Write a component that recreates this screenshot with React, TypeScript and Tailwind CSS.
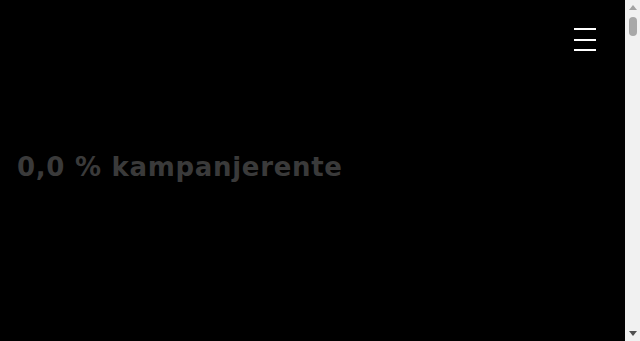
export default function App() {
  return (
    <div className="bg-black min-h-[5800px] w-full">
      <div className="pr-[15px]">
        <header className="flex justify-end pt-[28px] pr-[29px]">
          <button className="flex flex-col gap-[8.5px] w-[22px]">
            <span className="block h-[2px] w-[22px] bg-white" />
            <span className="block h-[2px] w-[22px] bg-white" />
            <span className="block h-[2px] w-[22px] bg-white" />
          </button>
        </header>
        <section className="pt-[103px] pl-[17px]">
          <h1
            className="text-[26px] font-bold text-[#3a3a3a] leading-none tracking-[0.7px]"
            style={{ fontFamily: "'DejaVu Sans', sans-serif" }}
          >
            0,0 % kampanjerente
          </h1>
        </section>
      </div>
      <div className="fixed top-0 right-0 h-[341px] w-[15px] bg-[#f1f1f1] flex flex-col items-center justify-between py-[5px]">
        <div className="flex flex-col items-center gap-[7px]">
          <div className="w-0 h-0 border-l-[4px] border-r-[4px] border-b-[5px] border-l-transparent border-r-transparent border-b-[#a3a3a3]" />
          <div className="w-[8px] h-[19px] rounded-full bg-[#a8a8a8]" />
        </div>
        <div className="w-0 h-0 border-l-[4px] border-r-[4px] border-t-[5px] border-l-transparent border-r-transparent border-t-[#505050]" />
      </div>
    </div>
  );
}
